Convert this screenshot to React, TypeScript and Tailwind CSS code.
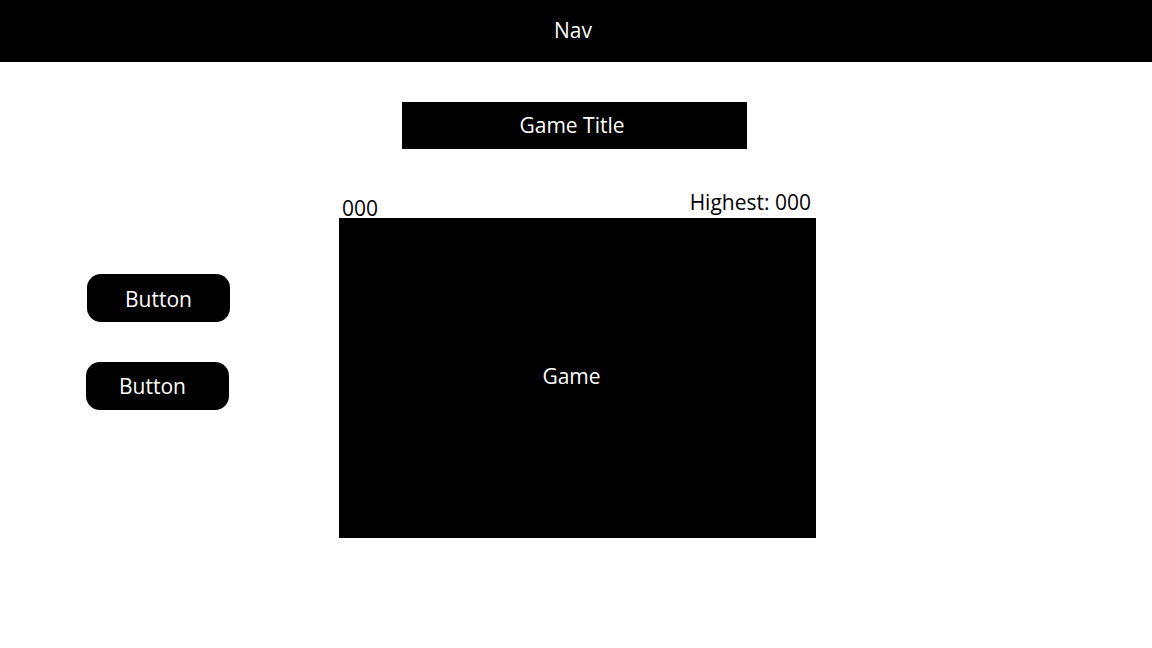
export default function App() {
  return (
    <div className="w-[1152px] h-[648px] bg-white text-black" style={{ fontFamily: "'Open Sans', Lato, sans-serif" }}>
      <header className="h-[62px] bg-black text-white flex items-center justify-center text-[21px]">
        <span className="-ml-[6px] -mt-[1px]">Nav</span>
      </header>
      <div className="pl-[402px] pt-[40px]">
        <div className="w-[345px] h-[47px] bg-black text-white flex items-center justify-center text-[21px]">
          <span className="-ml-[5px]">Game Title</span>
        </div>
      </div>
      <div className="flex mt-[44px]">
        <div className="w-[339px] pl-[86px] pt-[81px] flex flex-col gap-[40px]">
          <button className="w-[143px] h-[48px] bg-black text-white rounded-[14px] text-[21px] ml-[1px] pt-[4px]">Button</button>
          <button className="w-[143px] h-[48px] bg-black text-white rounded-[14px] text-[21px] pr-[10px] pt-[2px]">Button</button>
        </div>
        <div className="w-[477px] flex flex-col">
          <div className="h-[25px] flex justify-between items-end text-[21px] leading-none">
            <span className="pl-[3px] -mb-[1px]">000</span>
            <span className="pr-[5px] mb-[5px]">Highest: 000</span>
          </div>
          <div className="h-[320px] bg-black text-white flex items-center justify-center text-[21px]">
            <span className="-ml-[12px] -mt-[2px]">Game</span>
          </div>
        </div>
      </div>
    </div>
  );
}
